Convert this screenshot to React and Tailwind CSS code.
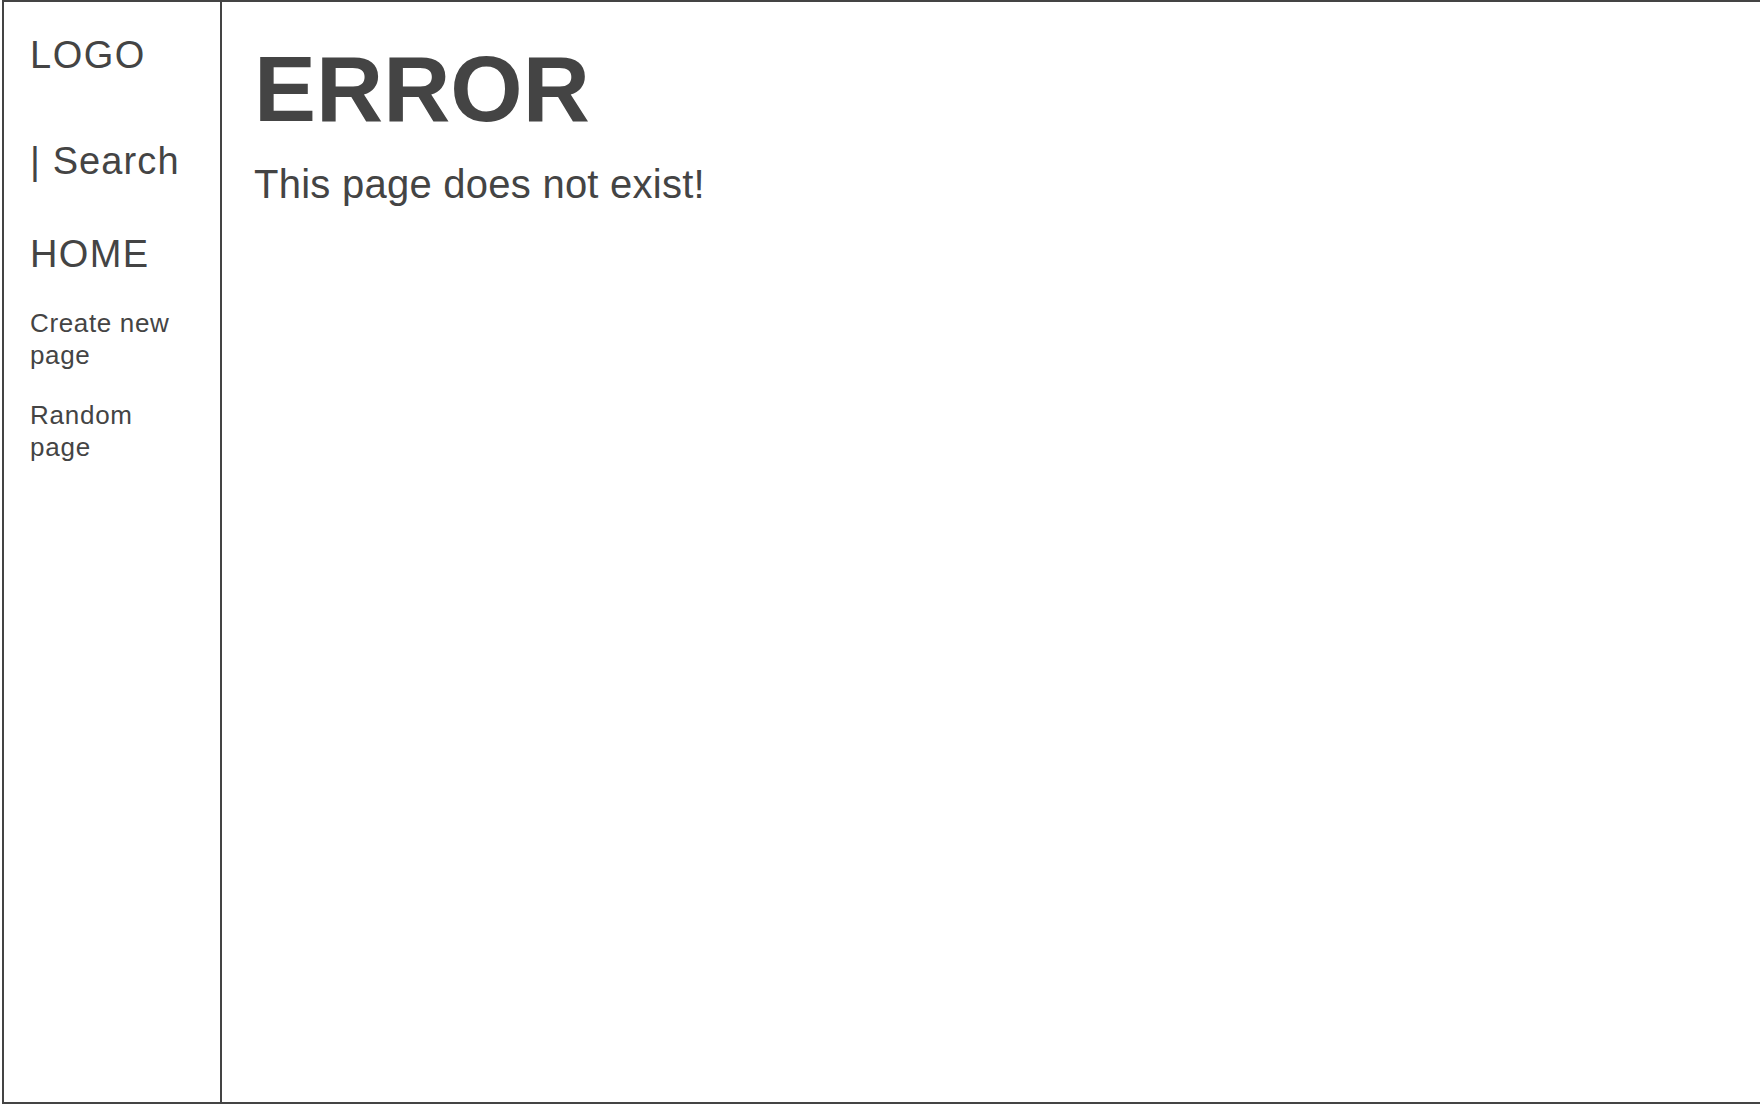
export default function App() {
  return (
    <div
      className="w-screen h-screen overflow-hidden bg-white text-[#444]"
      style={{ fontFamily: '"Liberation Sans", Arial, sans-serif' }}
    >
      <div className="ml-[2px] h-[1104px] flex border-t-2 border-l-2 border-b-2 border-[#444]">
        <aside className="w-[218px] shrink-0 border-r-2 border-[#444] pl-[26px] pr-[36px] pt-[34px] flex flex-col">
          <div className="text-[38px] leading-[38px] tracking-[1.5px]">LOGO</div>
          <div className="mt-[68px] text-[38px] leading-[38px] tracking-[1.1px]">| Search</div>
          <div className="mt-[55px] text-[38px] leading-[38px] tracking-[1.4px]">HOME</div>
          <a className="mt-[34px] text-[26px] leading-[32px] tracking-[0.65px] block">Create new page</a>
          <a className="mt-[28px] text-[26px] leading-[32px] tracking-[0.75px] block">Random page</a>
        </aside>
        <main className="flex-1 pl-[32px] pt-[41px]">
          <h1 className="text-[93px] leading-[93px] font-bold">ERROR</h1>
          <p className="mt-[28px] text-[40px] leading-[40px] tracking-[0.25px]">This page does not exist!</p>
        </main>
      </div>
    </div>
  );
}
